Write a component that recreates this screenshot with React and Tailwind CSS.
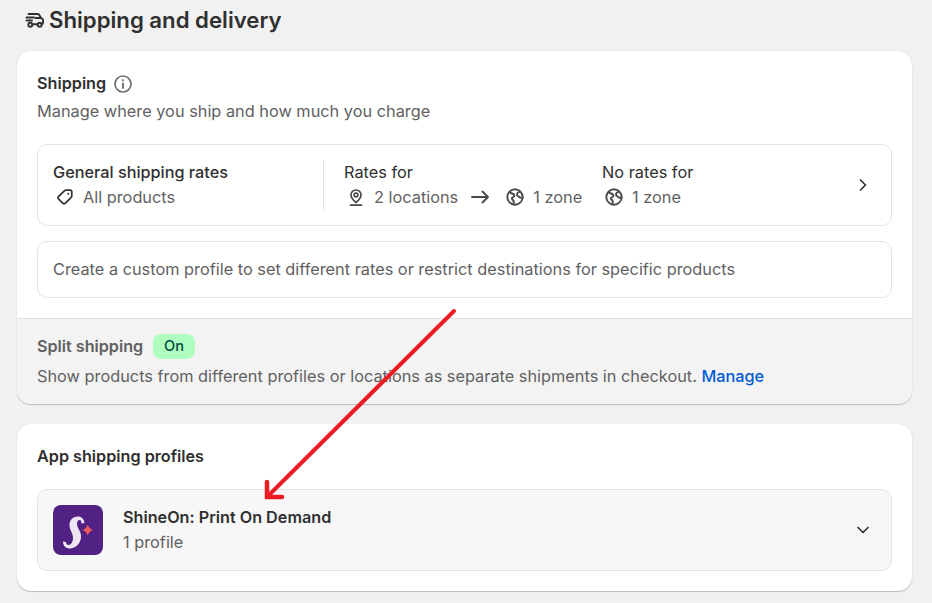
import React from 'react';
import { ChevronRight, ChevronDown } from 'lucide-react';

const Globe = () => (
  <svg viewBox="0 0 20 20" className="w-5 h-5 flex-none text-[#4a4a4a]" fill="none" stroke="currentColor" strokeWidth="1.9" strokeLinejoin="round" strokeLinecap="round">
    <circle cx="10" cy="10" r="7.7" />
    <path d="M4.500 5.200c1.500 1.300 3.400 1.300 4.500 2.300 1.200 1.200-.2 2.300-1.500 3-1.200.8-.6 1.800.5 2.600 1 .8 1 2.400.3 4.200" />
    <path d="M15.200 4.700c-1.500.4-3.300 1.300-3.200 3 .1 1.700 1.800 1.500 2.600 2.600.5.700 1.400.700 3 .2" />
  </svg>
);

const Pin = () => (
  <svg viewBox="0 0 20 20" className="w-5 h-5 flex-none text-[#4a4a4a]" fill="none" stroke="currentColor" strokeWidth="1.7" strokeLinejoin="round" strokeLinecap="round">
    <path d="M10 15.500c-2.800-2.300-5-4.600-5-7.500a5 5 0 0 1 10 0c0 2.900-2.200 5.200-5 7.500Z" />
    <circle cx="10" cy="8" r="1.900" />
    <path d="M4.500 18.200h11" />
  </svg>
);

const Arrow = () => (
  <svg viewBox="0 0 20 20" className="w-5 h-5 flex-none text-[#4a4a4a]" fill="none" stroke="currentColor" strokeWidth="1.900" strokeLinejoin="round" strokeLinecap="round">
    <path d="M2 10h16M12.500 4.500 18 10l-5.500 5.500" />
  </svg>
);

const InfoIcon = () => (
  <svg viewBox="0 0 20 20" className="w-5 h-5 flex-none mt-[1px] text-[#707070]" fill="none" stroke="currentColor" strokeWidth="1.700" strokeLinecap="round">
    <circle cx="10" cy="10" r="8" />
    <path d="M10 9.500v4.500" strokeWidth="1.900" />
    <circle cx="10" cy="6.300" r="1.100" fill="currentColor" stroke="none" />
  </svg>
);

const Tag = () => (
  <svg viewBox="0 0 20 20" className="w-5 h-5 flex-none text-[#303030]" fill="none" stroke="currentColor" strokeWidth="1.700" strokeLinejoin="round">
    <path d="M11 3.200h4.300a1.500 1.500 0 0 1 1.500 1.500V9a2 2 0 0 1-.6 1.400l-6 6a1.600 1.600 0 0 1-2.200 0l-4.600-4.600a1.600 1.600 0 0 1 0-2.200l6.200-5.900a2 2 0 0 1 1.400-.5Z" />
    <circle cx="13.300" cy="6.700" r="1" fill="currentColor" stroke="none" />
  </svg>
);

const Truck = () => (
  <svg viewBox="0 0 20 20" className="w-5 h-5 flex-none text-[#303030]" fill="none" stroke="currentColor" strokeWidth="1.900" strokeLinecap="round" strokeLinejoin="round">
    <path d="M3.500 4h9c.8 0 1.400.4 1.800 1l1.700 3 1.500 1c.4.300.5.800.5 1.300V13a1 1 0 0 1-1 1h-.5" />
    <path d="M12.500 14.200H7.500" />
    <path d="M1.500 7.500h7.500M1.500 10.500h5.500" />
    <path d="M10.500 8h5.500" />
    <circle cx="5.300" cy="14.700" r="2" />
    <circle cx="14.700" cy="14.700" r="2" />
  </svg>
);

const ShineOnLogo = () => (
  <div className="w-[50px] h-[50px] flex-none rounded-lg bg-[#512283]">
    <svg viewBox="0 0 50 50" className="w-[50px] h-[50px]">
      <path d="M31.500 18C31 14 28.500 11.500 25 11.500 20 11.500 16.500 15 16.500 20 16.500 25 20 28 20 33 20 37 18 40 15.500 40 14 40 13 39 13 37L10 36.500C10 40.500 12.500 43.500 16.500 43.500 23 43.500 28 38 28 31.500 28 26 24 23 24 19 24 16.500 25 15 26.500 15 28 15 28.500 16.500 28.500 18.500Z" fill="#efe6f3" />
      <path d="M34.700 19.500c1 3 2.500 4.500 5.500 5.500-3 1-4.500 2.500-5.500 5.500-1-3-2.500-4.500-5.500-5.500 3-1 4.500-2.500 5.500-5.500Z" fill="#ef5a5f" />
    </svg>
  </div>
);

const Card = ({ className, children }) => (
  <div className={`mx-[17px] w-[895px] bg-white rounded-[14px] shadow-[0_1px_1px_rgba(0,0,0,0.22),0_0_1px_rgba(0,0,0,0.12)] overflow-hidden ${className}`}>
    {children}
  </div>
);

export default function App() {
  return (
    <div className="relative h-[603px] w-[932px] overflow-hidden bg-[#f1f1f1] font-['Inter',sans-serif] text-[16.32px] text-[#303030]">
      <div className="flex items-center h-[40px] pl-[25px] gap-[4px]">
        <Truck />
        <h1 className="text-[22.2px] font-semibold leading-[40px] text-[#303030]">Shipping and delivery</h1>
      </div>

      <Card className="mt-[11px] h-[353px]">
        <div className="px-5 pt-[21px]">
          <div className="flex items-center gap-[7px] h-[22px]">
            <span className="font-semibold text-[16.2px]">Shipping</span>
            <InfoIcon />
          </div>
          <p className="mt-[5px] h-[24px] leading-[24px] text-[#616161]">Manage where you ship and how much you charge</p>

          <div className="mt-[21px] h-[82px] rounded-[10px] border border-[#e3e3e3] flex items-center pl-[15px] pr-[18px]">
            <div className="w-[271px] border-r border-[#e3e3e3] h-[50px] flex-none">
              <div className="font-medium text-[16.25px] leading-[24px]">General shipping rates</div>
              <div className="flex items-center gap-2 mt-[1px] pl-[2px] text-[#616161] leading-[24px]">
                <Tag />
                <span>All products</span>
              </div>
            </div>
            <div className="pl-5 w-[278px] flex-none h-[50px]">
              <div className="leading-[24px]">Rates for</div>
              <div className="flex items-center mt-[1px] pl-[2px] text-[#616161] leading-[24px]">
                <Pin />
                <span className="ml-2">2 locations</span>
                <div className="ml-[12px]"><Arrow /></div>
                <div className="ml-[15px]"><Globe /></div>
                <span className="ml-2">1 zone</span>
              </div>
            </div>
            <div className="h-[50px] flex-1">
              <div className="leading-[24px]">No rates for</div>
              <div className="flex items-center gap-2 mt-[1px] pl-[2px] text-[#616161] leading-[24px]">
                <Globe />
                <span>1 zone</span>
              </div>
            </div>
            <ChevronRight className="w-5 h-5 text-[#303030]" strokeWidth={2} />
          </div>

          <div className="mt-[15px] h-[57px] rounded-[10px] border border-[#e3e3e3] flex items-center pl-[15px] pb-[1px] text-[#616161]">
            Create a custom profile to set different rates or restrict destinations for specific products
          </div>
        </div>

        <div className="mt-[20px] h-[87px] bg-[#f3f3f3] border-t border-[#e3e3e3] px-5 pt-[14px] text-[#616161]">
          <div className="flex items-center gap-[10px] h-[26px]">
            <span className="font-semibold text-[16.15px]">Split shipping</span>
            <span className="h-[25px] px-[11px] rounded-lg bg-[#affebf] text-[#014b40] text-[14.6px] font-medium leading-[25px]">On</span>
          </div>
          <p className="mt-[5px] leading-[24px]">
            Show products from different profiles or locations as separate shipments in checkout. <span className="text-[#005bd3] font-medium text-[16.25px]">Manage</span>
          </p>
        </div>
      </Card>

      <Card className="mt-[20px] h-[167px]">
        <div className="px-5 pt-[20px]">
          <div className="font-semibold text-[16.2px] leading-[24px]">App shipping profiles</div>
          <div className="mt-[21px] h-[82px] rounded-[10px] border border-[#e3e3e3] bg-[#f7f7f7] flex items-center pl-[15px] pr-[18px]">
            <ShineOnLogo />
            <div className="ml-5 flex-1 pb-[2px]">
              <div className="font-semibold text-[16.2px] leading-[24px]">ShineOn: Print On Demand</div>
              <div className="text-[#616161] leading-[24px] mt-[1px]">1 profile</div>
            </div>
            <ChevronDown className="w-5 h-5 text-[#303030]" strokeWidth={2} />
          </div>
        </div>
      </Card>

      {/* annotation arrow */}
      <svg className="absolute left-0 top-0 pointer-events-none" width="932" height="603" fill="none">
        <path d="M454 311 L267 497" stroke="#ed1c24" strokeWidth="4" strokeLinecap="round" />
        <path d="M267 482 V497 H282" stroke="#ed1c24" strokeWidth="4.500" strokeLinecap="round" />
      </svg>
    </div>
  );
}
